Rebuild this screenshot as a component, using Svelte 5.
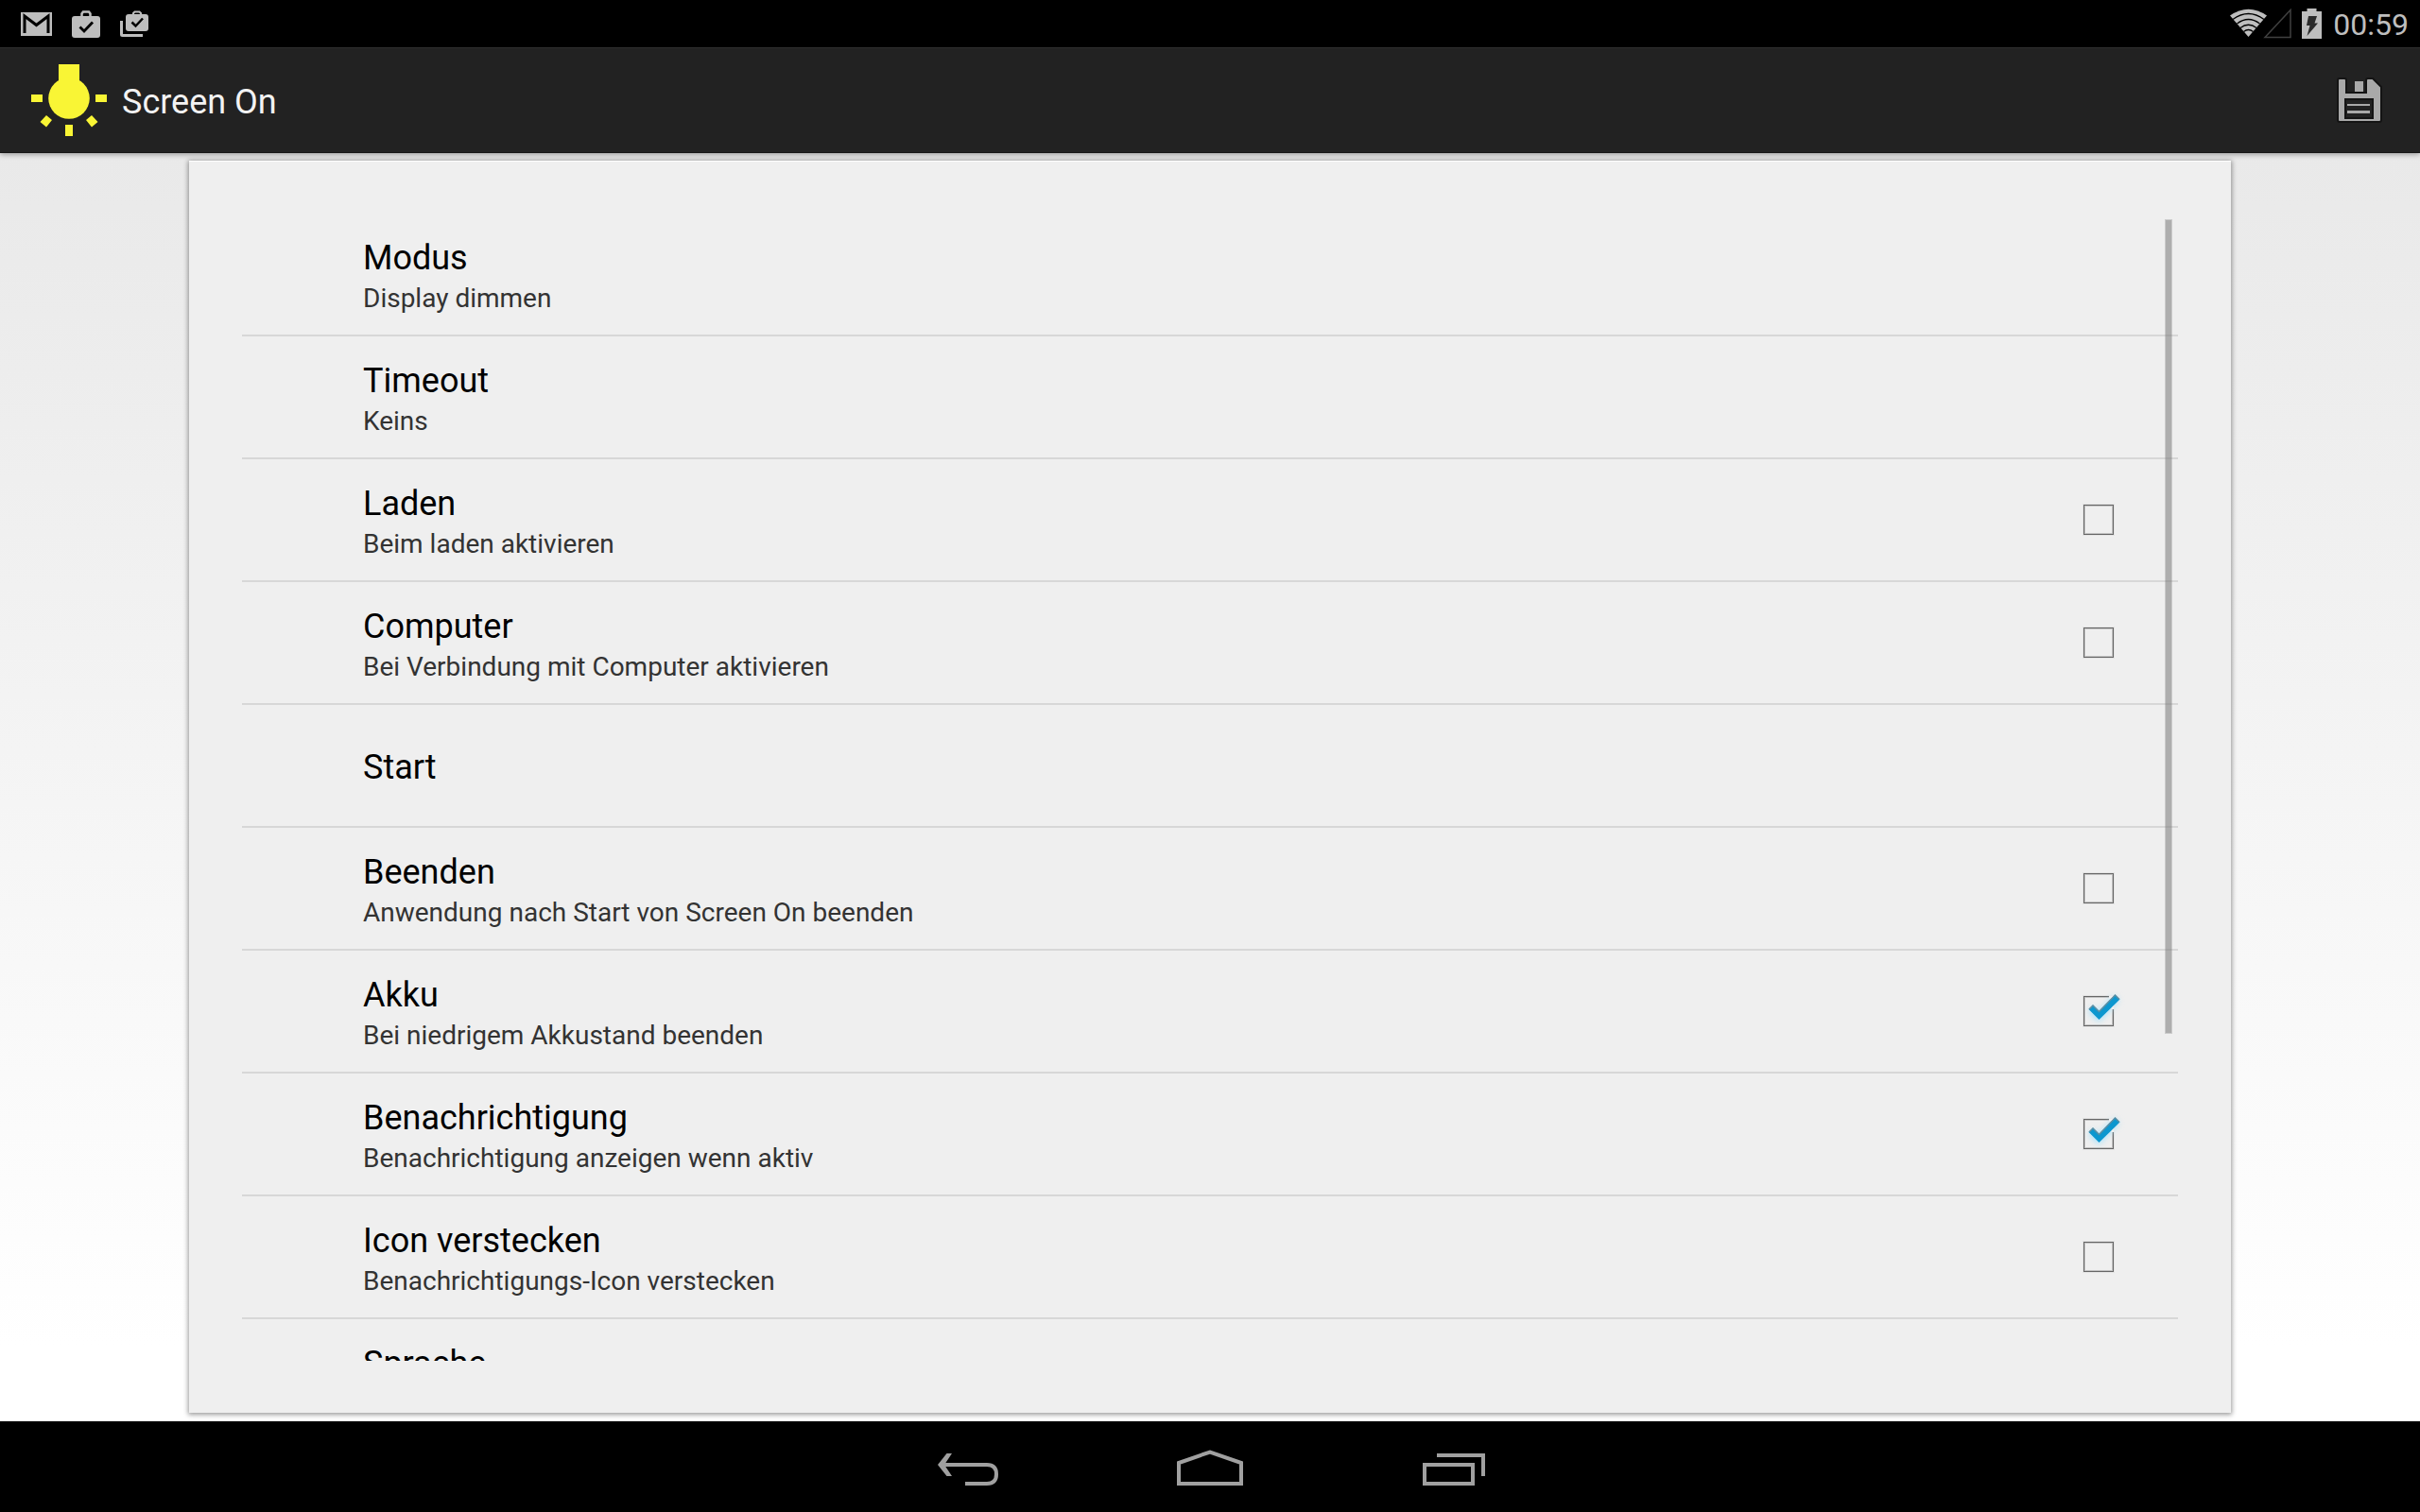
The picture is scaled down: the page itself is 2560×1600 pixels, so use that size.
<script>
  let settings = $state([
    { id: 'mode', title: 'Modus', summary: 'Display dimmen' },
    { id: 'timeout', title: 'Timeout', summary: 'Keins' },
    { id: 'charging', title: 'Laden', summary: 'Beim laden aktivieren', checked: false },
    { id: 'computer', title: 'Computer', summary: 'Bei Verbindung mit Computer aktivieren', checked: false },
    { id: 'start', title: 'Start' },
    { id: 'quit', title: 'Beenden', summary: 'Anwendung nach Start von Screen On beenden', checked: false },
    { id: 'battery', title: 'Akku', summary: 'Bei niedrigem Akkustand beenden', checked: true },
    { id: 'notification', title: 'Benachrichtigung', summary: 'Benachrichtigung anzeigen wenn aktiv', checked: true },
    { id: 'icon', title: 'Icon verstecken', summary: 'Benachrichtigungs-Icon verstecken', checked: false },
    { id: 'language', title: 'Sprache', summary: 'Deutsch' }
  ]);
</script>

{#snippet texts(item)}
  <span class="texts">
    <span class="title">{item.title}</span>
    {#if item.summary}
      <span class="summary">{item.summary}</span>
    {/if}
  </span>
{/snippet}

<div class="screen">
  <header class="status-bar">
    <div class="notifications">
      <svg width="33" height="25" viewBox="0 0 33 25">
        <path fill="#bebebe" d="M0 0h33v25H0z" />
        <path fill="none" stroke="#000" stroke-width="3" d="M4 22V4l12.5 9.500L29 4v18" />
      </svg>
      <svg width="30" height="29" viewBox="0 0 30 29">
        <path fill="none" stroke="#bebebe" stroke-width="2.500" d="M10.500 7V3.500L12 1.500h6l1.500 2V7" />
        <rect y="6" width="30" height="23" rx="3" fill="#bebebe" />
        <path fill="none" stroke="#000" stroke-width="2.800" d="M8.500 17.500l4.500 4.500 9-9.500" />
      </svg>
      <svg width="30" height="29" viewBox="0 0 30 29">
        <path fill="none" stroke="#bebebe" stroke-width="2" d="M14 5V3l1.500-1.500h5L22 3v2" />
        <rect x="6" y="4" width="24" height="18" rx="3" fill="#bebebe" />
        <path fill="none" stroke="#000" stroke-width="2.500" d="M12.500 12.500l4 4 7.500-8" />
        <path fill="#bebebe" d="M0 11h3v14h21v3H2.500Q0 28 0 25.500z" />
      </svg>
    </div>
    <div class="system">
      <svg width="66" height="32" viewBox="0 0 66 32">
        <path fill="#bebebe" d="M0 7.500Q19.500-6 39 7.500L19.500 30z" />
        <path fill="none" stroke="#000" stroke-width="1.300" d="M3 11.500q16.500-12 33 0M7.500 16q12-9 24 0M11 20.500q8.500-6.500 17 0M14.500 24.500q5-4 10 0" />
        <path fill="none" stroke="#404040" stroke-width="1.500" d="M37 30.500L64 1.500v29z" />
      </svg>
      <svg width="21" height="32" viewBox="0 0 21 32">
        <path fill="#bebebe" d="M5.500 0h10v3H21v29H0V3h5.500z" />
        <path fill="#2b2b2b" d="M7 8h9l-2.500 7.500H17L5.500 29 8.500 18H5z" />
      </svg>
      <time>00:59</time>
    </div>
  </header>

  <div class="action-bar">
    <svg width="80" height="76" viewBox="0 0 80 76">
      <g fill="#f9f535">
        <path d="M29 0h22v20H29z" />
        <circle cx="40" cy="36" r="21.800" />
        <path d="M0 32h12v8H0zM68 32h12v8H68zM36 64h8v12h-8z" />
        <path d="M16 54l6 5-6 7.500-6.500-5.500zM64 54l-6 5 6 7.500 6.500-5.500z" />
      </g>
    </svg>
    <h1>Screen On</h1>
    <button class="save" aria-label="Speichern">
      <svg width="48" height="48" viewBox="0 0 48 48">
        <path fill="#a9a9a9" stroke="#141414" stroke-width="2" d="M3 1h5q2 0 2 2v13h21V3q0-2 2-2h5l9 9v35q0 2-2 2H3q-2 0-2-2V3q0-2 2-2z" />
        <path fill="#a9a9a9" d="M19 4h9v11h-9z" />
        <path fill="#222" stroke="#141414" stroke-width="2" d="M9 23h29v20H9z" />
        <path fill="#a9a9a9" d="M11 28h24v2H11zM11 35h24v3H11z" />
      </svg>
    </button>
  </div>

  <main>
    <section class="panel">
      <div class="list-wrap">
        <ul>
          {#each settings as item (item.id)}
            <li>
              {#if item.checked === undefined}
                <button class="row">{@render texts(item)}</button>
              {:else}
                <label class="row">
                  {@render texts(item)}
                  <span class="check">
                    <input type="checkbox" bind:checked={item.checked} />
                    {#if item.checked}
                      <svg class="tick" width="56" height="48" viewBox="-8 -8 56 48">
                        <path class="glow" d="M8 14l8 8L35 2" />
                        <path fill="none" stroke="#efefef" stroke-width="3" d="M27 1h5M31 0v14" />
                        <path fill="#0c97cf" d="M5.500 14L10 9.500l6.500 6.500L33.500-1.500 38.500 3.500 16.500 25z" />
                        <path fill="none" stroke="#5f8fa3" stroke-width="1.500" d="M6 14l4-4 6.500 6.500L33.500-1l4.500 4.500" />
                      </svg>
                    {/if}
                  </span>
                </label>
              {/if}
            </li>
          {/each}
        </ul>
        <div class="thumb"></div>
      </div>
    </section>
  </main>

  <nav>
    <button aria-label="Zurück">
      <svg width="72" height="48" viewBox="0 0 72 48">
        <path fill="none" stroke="#a0a0a0" stroke-width="4" d="M11 22h47q10 0 10 10t-10 10H35" />
        <path fill="#a0a0a0" d="M6 22L15.500 10H21l-8 12 8 12h-5.500z" />
      </svg>
    </button>
    <button aria-label="Startseite">
      <svg width="72" height="48" viewBox="0 0 72 48">
        <path fill="none" stroke="#a0a0a0" stroke-width="4" d="M3 42V20L36 8.500 69 20v22z" />
      </svg>
    </button>
    <button aria-label="Letzte Apps">
      <svg width="72" height="48" viewBox="0 0 72 48">
        <path fill="none" stroke="#a0a0a0" stroke-width="4" d="M5 22h51v20H5zM18 12h49v22" />
      </svg>
    </button>
  </nav>
</div>

<style>
  :global(body) {
    margin: 0;
    background: #000;
  }

  .screen {
    display: flex;
    flex-direction: column;
    height: 100vh;
    font-family: Roboto, 'Noto Sans', sans-serif;
  }

  svg {
    display: block;
    flex: none;
  }

  button {
    margin: 0;
    padding: 0;
    border: none;
    background: none;
    font: inherit;
    color: inherit;
    cursor: pointer;
  }

  .status-bar {
    display: flex;
    justify-content: space-between;
    align-items: center;
    box-sizing: border-box;
    height: 50px;
    padding: 0 12px 0 22px;
    background: #000;
    color: #bebebe;
  }

  .notifications {
    display: flex;
    align-items: center;
    gap: 21px;
  }

  .system {
    display: flex;
    align-items: center;
    gap: 10px;
  }

  time {
    padding: 2px 0 0 2px;
    font-size: 32px;
    line-height: 38px;
  }

  .action-bar {
    display: flex;
    align-items: center;
    box-sizing: border-box;
    height: 112px;
    padding: 0 40px 0 33px;
    border-top: 1px solid #2e2e2e;
    border-bottom: 1px solid #171717;
    background: #222;
    z-index: 1;
    box-shadow: 0 1px 6px rgba(0, 0, 0, 0.4);
  }

  h1 {
    flex: 1;
    margin: 0;
    padding: 4px 0 0 16px;
    font-size: 36px;
    font-weight: 400;
    line-height: 42px;
    color: #f3f3f3;
  }

  main {
    display: flex;
    flex: 1;
    min-height: 0;
    box-sizing: border-box;
    padding: 8px 200px 9px;
    background: linear-gradient(#e9e9e9, #fff 94%);
  }

  .panel {
    flex: 1;
    display: flex;
    box-sizing: border-box;
    padding: 55px 56px;
    border-top: 1px solid #fff;
    background: #efefef;
    box-shadow: 0 1px 5px 1px rgba(0, 0, 0, 0.4);
  }

  .list-wrap {
    position: relative;
    flex: 1;
  }

  ul {
    height: 100%;
    margin: 0;
    padding: 0;
    list-style: none;
    overflow-y: auto;
    scrollbar-width: none;
  }

  li {
    border-bottom: 2px solid #d7d7d7;
  }

  .row {
    display: flex;
    align-items: center;
    justify-content: space-between;
    box-sizing: border-box;
    width: 100%;
    height: 128px;
    padding: 0 68px 0 128px;
    text-align: left;
    cursor: pointer;
  }

  .texts {
    display: flex;
    flex-direction: column;
    padding-top: 4px;
  }

  .title {
    font-size: 36px;
    line-height: 48px;
    color: #000;
  }

  .summary {
    font-size: 28px;
    line-height: 38px;
    color: #333;
  }

  .check {
    position: relative;
    width: 32px;
    height: 32px;
  }

  input {
    display: block;
    appearance: none;
    box-sizing: border-box;
    width: 32px;
    height: 32px;
    margin: 0;
    border: 1px solid #666;
    box-shadow: inset 0 0 0 1px #c4c4c4, 0 0 0 1px #e3e3e3;
  }

  .tick {
    position: absolute;
    top: -8px;
    left: -8px;
    pointer-events: none;
  }

  .glow {
    fill: none;
    stroke: #a4e0fb;
    stroke-width: 7px;
    filter: blur(3px);
  }

  .thumb {
    position: absolute;
    top: 6px;
    right: 6px;
    width: 8px;
    height: 71%;
    box-sizing: border-box;
    border: 1px solid rgba(120, 120, 120, 0.3);
    background: rgba(120, 120, 120, 0.55);
    background-clip: padding-box;
    pointer-events: none;
  }

  nav {
    display: flex;
    justify-content: center;
    align-items: center;
    height: 96px;
    gap: 186px;
    background: #000;
  }
</style>
